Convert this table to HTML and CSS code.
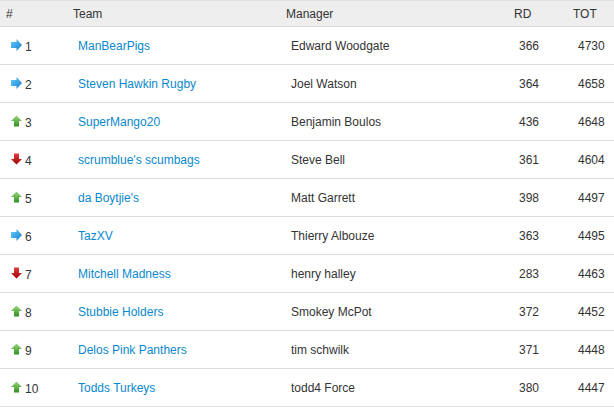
FILE: index.html
```html
<!DOCTYPE html>
<html>
<head>
<meta charset="utf-8">
<link rel="stylesheet" href="styles.css">
</head>
<body>
<svg width="0" height="0" class="defs">
  <defs>
    <linearGradient id="gb" x1="0" y1="0" x2="1" y2="1">
      <stop offset="0" stop-color="#6ccaf8"/>
      <stop offset="1" stop-color="#117fd3"/>
    </linearGradient>
    <linearGradient id="gg" x1="0" y1="0" x2="0" y2="1">
      <stop offset="0" stop-color="#9ad97c"/>
      <stop offset="1" stop-color="#2f8f1f"/>
    </linearGradient>
    <linearGradient id="gr" x1="0" y1="0" x2="0" y2="1">
      <stop offset="0" stop-color="#e0403d"/>
      <stop offset="1" stop-color="#a00000"/>
    </linearGradient>
    <symbol id="same" viewBox="0 0 11 12"><path d="M0 3H5.5V0L11 6L5.5 12V9H0Z" fill="url(#gb)"/></symbol>
    <symbol id="up" viewBox="0 0 11 12"><path d="M5.5 0.5L11 6H8V11.5H3V6H0Z" fill="url(#gg)"/></symbol>
    <symbol id="down" viewBox="0 0 11 12"><path d="M3 0.5H8V6H11L5.5 11.5L0 6H3Z" fill="url(#gr)"/></symbol>
  </defs>
</svg>
<table class="league">
  <thead>
    <tr><th class="c-pos">#</th><th class="c-team">Team</th><th class="c-mgr">Manager</th><th class="c-rd">RD</th><th class="c-tot">TOT</th></tr>
  </thead>
  <tbody>
    <tr><td><svg class="ic"><use href="#same"/></svg>1</td><td><a href="#">ManBearPigs</a></td><td>Edward Woodgate</td><td>366</td><td>4730</td></tr>
    <tr><td><svg class="ic"><use href="#same"/></svg>2</td><td><a href="#">Steven Hawkin Rugby</a></td><td>Joel Watson</td><td>364</td><td>4658</td></tr>
    <tr><td><svg class="ic"><use href="#up"/></svg>3</td><td><a href="#">SuperMango20</a></td><td>Benjamin Boulos</td><td>436</td><td>4648</td></tr>
    <tr><td><svg class="ic"><use href="#down"/></svg>4</td><td><a href="#">scrumblue's scumbags</a></td><td>Steve Bell</td><td>361</td><td>4604</td></tr>
    <tr><td><svg class="ic"><use href="#up"/></svg>5</td><td><a href="#">da Boytjie's</a></td><td>Matt Garrett</td><td>398</td><td>4497</td></tr>
    <tr><td><svg class="ic"><use href="#same"/></svg>6</td><td><a href="#">TazXV</a></td><td>Thierry Albouze</td><td>363</td><td>4495</td></tr>
    <tr><td><svg class="ic"><use href="#down"/></svg>7</td><td><a href="#">Mitchell Madness</a></td><td>henry halley</td><td>283</td><td>4463</td></tr>
    <tr><td><svg class="ic"><use href="#up"/></svg>8</td><td><a href="#">Stubbie Holders</a></td><td>Smokey McPot</td><td>372</td><td>4452</td></tr>
    <tr><td><svg class="ic"><use href="#up"/></svg>9</td><td><a href="#">Delos Pink Panthers</a></td><td>tim schwilk</td><td>371</td><td>4448</td></tr>
    <tr><td><svg class="ic"><use href="#up"/></svg>10</td><td><a href="#">Todds Turkeys</a></td><td>todd4 Force</td><td>380</td><td>4447</td></tr>
  </tbody>
</table>
</body>
</html>
```
FILE: styles.css
```css
html, body {
  margin: 0;
  padding: 0;
  background: #fff;
}
body {
  font-family: "Liberation Sans", Arial, sans-serif;
  font-size: 12px;
  color: #333;
}
.defs {
  position: absolute;
  width: 0;
  height: 0;
}
.league {
  width: 614px;
  border-collapse: collapse;
  table-layout: fixed;
}
.league th {
  background: #eeeeee;
  font-weight: normal;
  text-align: left;
  color: #333;
  height: 25px;
  padding: 0 0 0 6px;
  border-top: 1px solid #e2e2e2;
  border-bottom: 1px solid #dadada;
  line-height: 14px;
  vertical-align: middle;
}
.league td {
  height: 36px;
  padding: 1px 0 0 11px;
  border-bottom: 1px solid #dddddd;
  line-height: 14px;
  vertical-align: middle;
  white-space: nowrap;
}
.c-pos { width: 61px; }
.c-team { width: 207px; }
.c-mgr { width: 222px; }
.c-rd { width: 53px; }
.league a {
  color: #0a88cc;
  text-decoration: none;
}
.ic {
  width: 11px;
  height: 12px;
  vertical-align: 0;
  margin-right: 3px;
}
```
